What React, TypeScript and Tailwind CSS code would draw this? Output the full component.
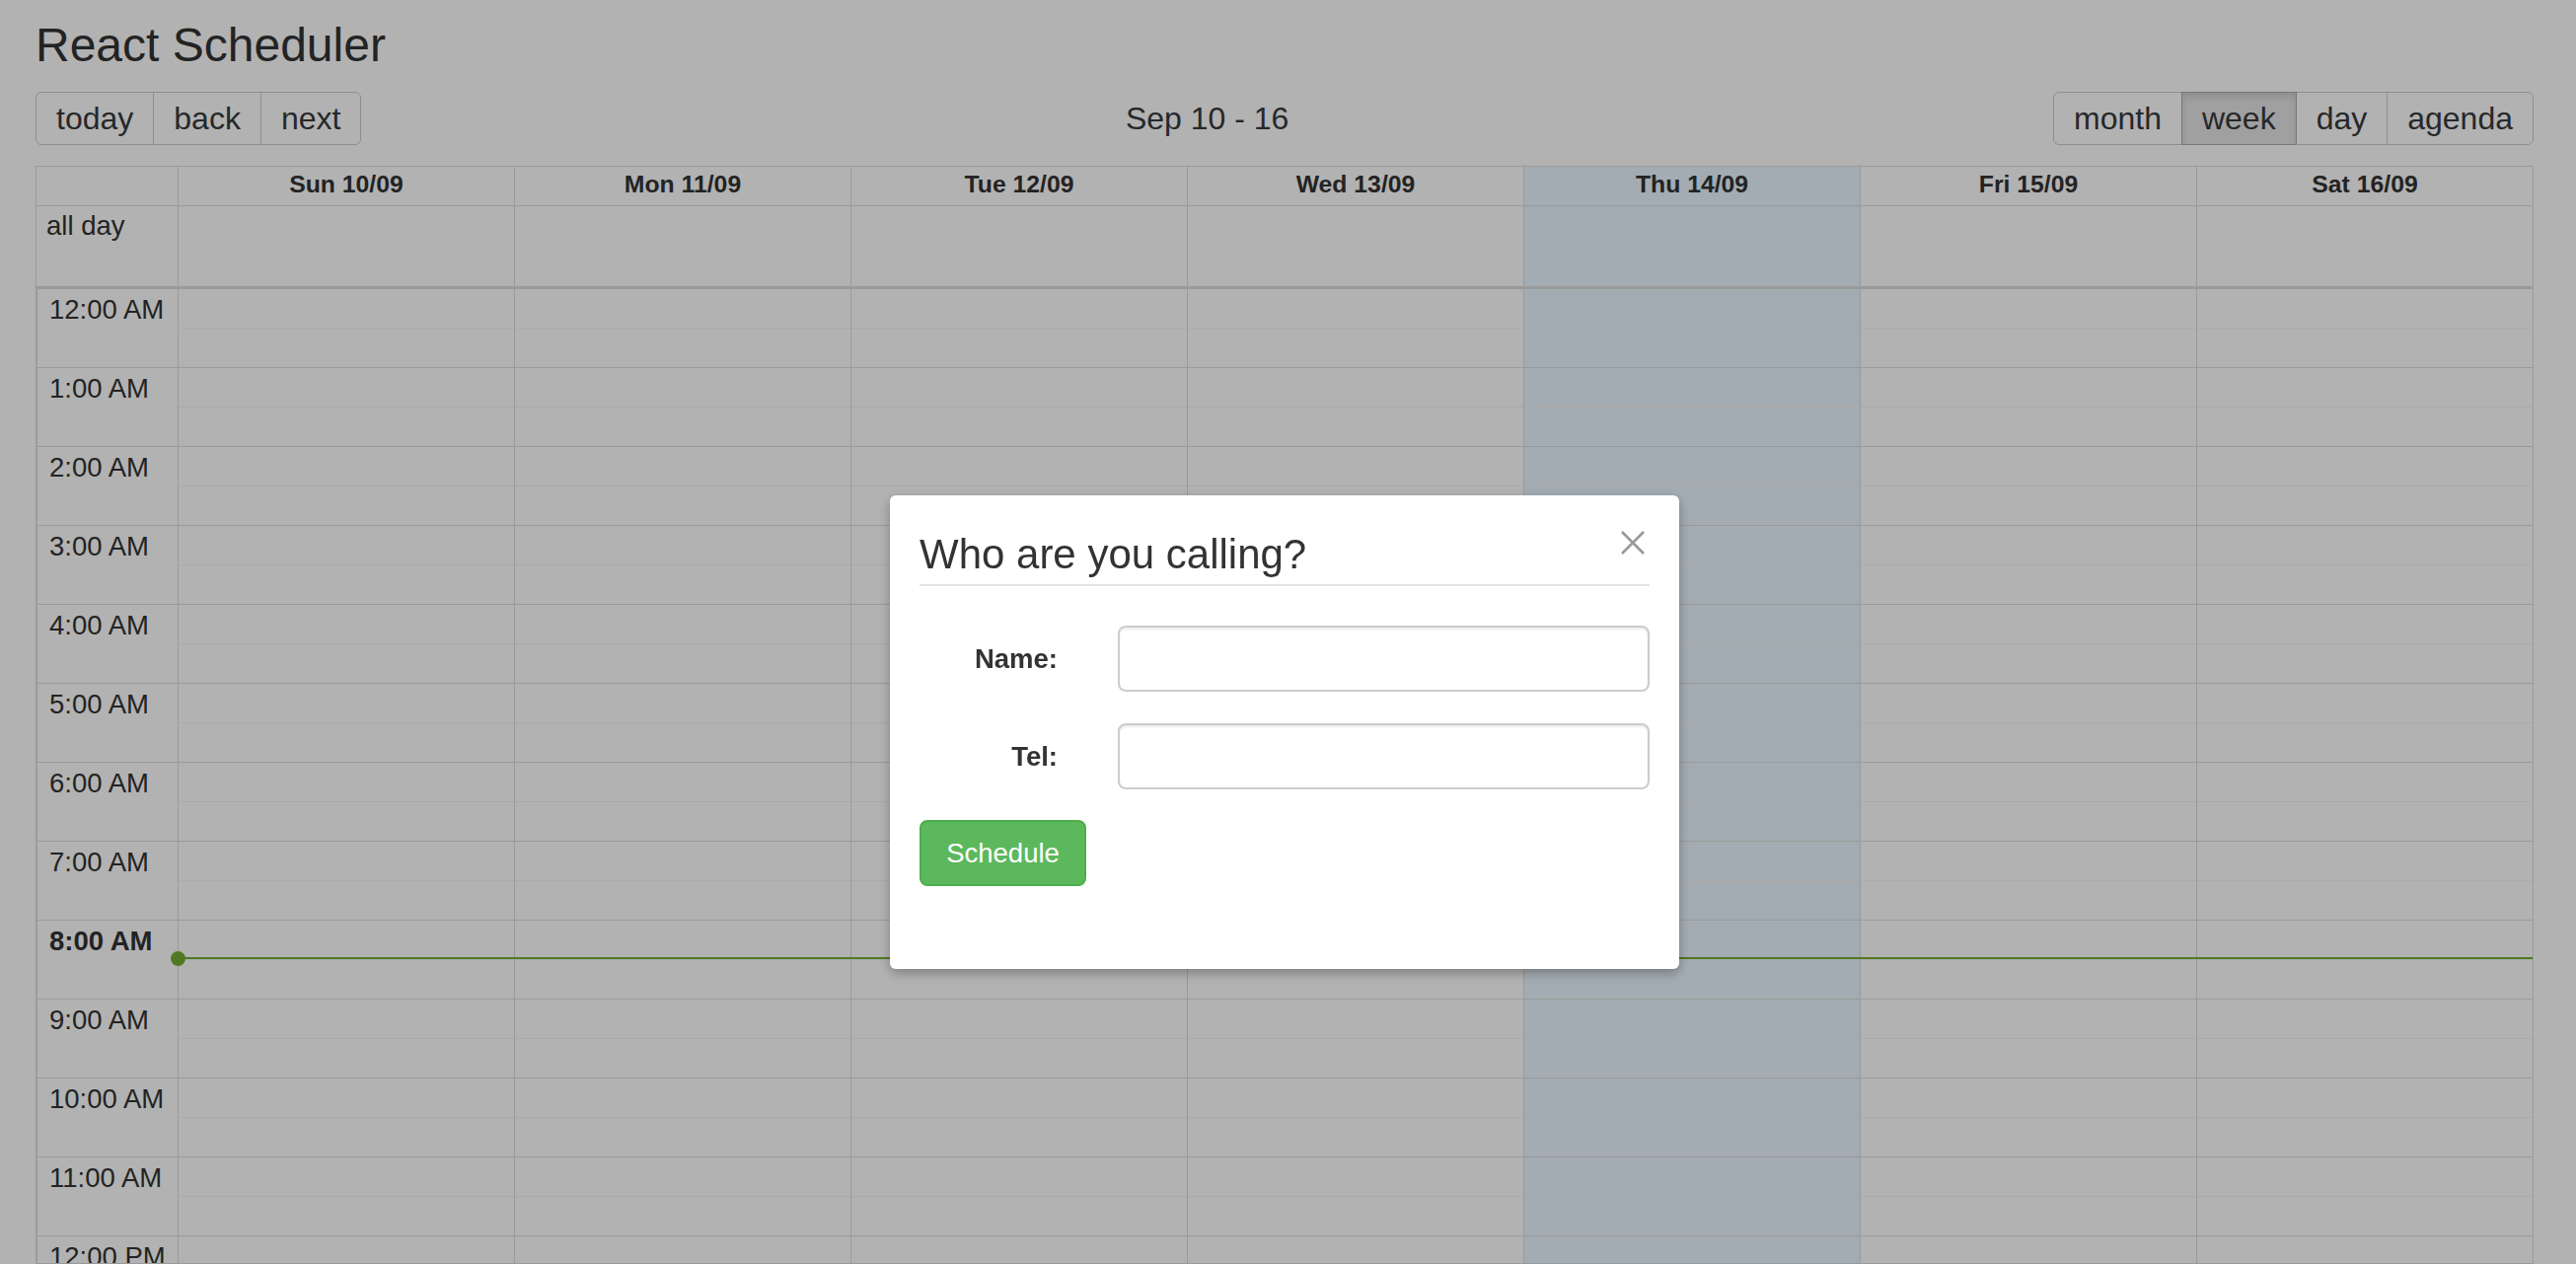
import clsx from 'clsx';

const DAYS = ['Sun 10/09', 'Mon 11/09', 'Tue 12/09', 'Wed 13/09', 'Thu 14/09', 'Fri 15/09', 'Sat 16/09'];
const TODAY = 4;
const NOW_HOUR = 8;
const HOURS = Array.from({ length: 24 }, (_, i) => {
  const h = i % 12 === 0 ? 12 : i % 12;
  return `${h}:00 ${i < 12 ? 'AM' : 'PM'}`;
});

function BtnGroup({ items, active }: { items: string[]; active?: string }) {
  return (
    <div className="flex shrink-0">
      {items.map((item, i) => (
        <button
          key={item}
          type="button"
          className={clsx(
            'h-[54px] border px-[20px] text-[32px] leading-none text-[#373a3c]',
            i > 0 && '-ml-px',
            i === 0 && 'rounded-l-[6px]',
            i === items.length - 1 && 'rounded-r-[6px]',
            item === active
              ? 'relative z-[1] border-[#adadad] bg-[#e6e6e6] shadow-[inset_0_4px_7px_rgba(0,0,0,0.125)]'
              : 'border-[#ccc] bg-white'
          )}
        >
          {item}
        </button>
      ))}
    </div>
  );
}

function Calendar() {
  return (
    <div className="mt-[21px] flex min-h-0 flex-1 flex-col border border-[#ddd]">
      {/* day headers */}
      <div className="flex border-b border-[#ddd]">
        <div className="w-[143px] shrink-0" />
        {DAYS.map((d, i) => (
          <div
            key={d}
            className={clsx(
              'h-[39px] flex-1 border-l border-[#ddd] px-[3px] text-center text-[24.75px] font-bold leading-[35px]',
              i === TODAY && 'bg-[#eaf6ff]'
            )}
          >
            {d}
          </div>
        ))}
      </div>

      {/* all day row */}
      <div className="flex h-[84px] border-b-[3px] border-[#ddd]">
        <div className="w-[143px] shrink-0 pl-[10px] text-[27.5px] leading-[39px]">all day</div>
        {DAYS.map((d, i) => (
          <div key={d} className={clsx('flex-1 border-l border-[#ddd]', i === TODAY && 'bg-[#eaf6ff]')} />
        ))}
      </div>

      {/* time grid */}
      <div className="relative flex min-h-0 flex-1 overflow-hidden">
        <div className="w-[143px] shrink-0 border-l border-[#ddd]">
          {HOURS.map((h, i) => (
            <div
              key={h}
              className={clsx(
                'h-[80px] border-b border-[#ddd] pl-[12px] pt-[1px] text-[27.5px] leading-[39px]',
                i === NOW_HOUR && 'font-bold'
              )}
            >
              {h}
            </div>
          ))}
        </div>
        {DAYS.map((d, i) => (
          <div key={d} className={clsx('flex-1 border-l border-[#ddd]', i === TODAY && 'bg-[#eaf6ff]')}>
            {HOURS.map((h) => (
              <div key={h} className="h-[80px] border-b border-[#ddd]">
                <div className="h-[40px] border-b border-[#f4f4f4]" />
              </div>
            ))}
          </div>
        ))}

        {/* current time indicator */}
        <div className="absolute left-[143px] right-0 top-[677px] h-[2px] bg-[#74ad31]" />
        <div className="absolute left-[136px] top-[671px] h-[15px] w-[15px] rounded-full bg-[#74ad31]" />
      </div>
    </div>
  );
}

function CallDialog() {
  return (
    <div className="fixed inset-0 z-20 flex items-start justify-center pl-[36px] pr-[43px] pt-[502px]">
      <div className="h-[480px] w-[800px] rounded-[6px] bg-white px-[30px] pt-[37px] shadow-[0_4px_12px_rgba(0,0,0,0.3)]">
        <div className="flex items-start justify-between border-b-2 border-[#e5e5e5] pb-[7px]">
          <h4 className="text-[42px] font-normal leading-[46px] text-[#333]">Who are you calling?</h4>
          <svg className="mr-[5px] -mt-px h-[24px] w-[24px]" viewBox="0 0 24 24" fill="none" stroke="#999" strokeWidth="2.6">
            <path d="M1 1 L23 23 M23 1 L1 23" />
          </svg>
        </div>

        <div className="mt-[40px] flex items-center">
          <label className="w-[140px] shrink-0 text-right text-[27.5px] font-bold text-[#333]">Name:</label>
          <input
            type="text"
            className="ml-[61px] h-[67px] min-w-0 flex-1 rounded-[8px] border-2 border-[#ccc] px-[16px] text-[27.5px] shadow-[inset_0_2px_2px_rgba(0,0,0,0.075)] outline-none"
          />
        </div>
        <div className="mt-[32px] flex items-center">
          <label className="w-[140px] shrink-0 text-right text-[27.5px] font-bold text-[#333]">Tel:</label>
          <input
            type="tel"
            className="ml-[61px] h-[67px] min-w-0 flex-1 rounded-[8px] border-2 border-[#ccc] px-[16px] text-[27.5px] shadow-[inset_0_2px_2px_rgba(0,0,0,0.075)] outline-none"
          />
        </div>

        <button
          type="button"
          className="mt-[31px] h-[67px] w-[169px] rounded-[8px] border-2 border-[#4cae4c] bg-[#5cb85c] text-[27.5px] text-white"
        >
          Schedule
        </button>
      </div>
    </div>
  );
}

export default function App() {
  return (
    <div className="relative flex h-screen flex-col overflow-hidden bg-white pl-[36px] pr-[43px] pt-[19px] font-['Liberation_Sans',Arial,sans-serif] text-[#333]">
      <h1 className="text-[48px] font-normal leading-[53px]">React Scheduler</h1>

      <div className="mt-[21px] flex items-center">
        <BtnGroup items={['today', 'back', 'next']} />
        <span className="flex-1 text-center text-[32px] leading-none text-[#373a3c]">Sep 10 - 16</span>
        <BtnGroup items={['month', 'week', 'day', 'agenda']} active="week" />
      </div>

      <Calendar />

      <div className="fixed inset-0 z-10 bg-black/30" />
      <CallDialog />
    </div>
  );
}
